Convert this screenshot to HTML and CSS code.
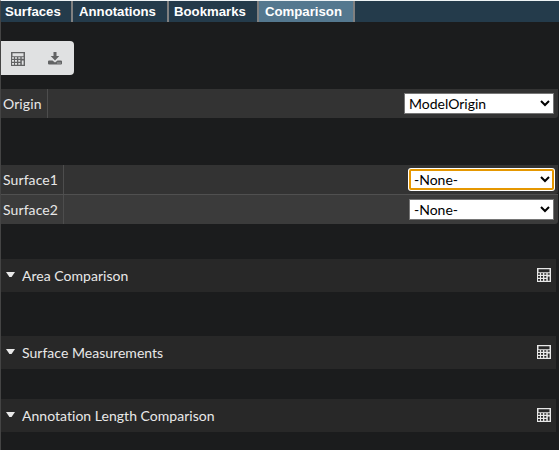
FILE: index.html
```html
<!DOCTYPE html>
<html lang="en">
<head>
<meta charset="utf-8">
<title>Comparison</title>
<link rel="stylesheet" href="styles.css">
</head>
<body>
<svg class="defs" width="0" height="0">
  <symbol id="calculator" viewBox="0 0 14 14">
    <path fill="currentColor" fill-rule="evenodd" d="M0 0h14v14H0zM1.5 1.3v2.9h11V1.3zM1 5.2v1.6h2V5.2zM4 5.2v1.6h2V5.2zM7.3 5.2v1.6h2V5.2zM10.7 5.2v1.6h2V5.2zM1 8v1.8h2V8zM4 8v1.8h2V8zM7.3 8v1.8h2V8zM1 11v1.8h2V11zM4 11v1.8h2V11zM7.3 11v1.8h2V11zM10.8 8.4v4.3h1.8V8.4z"/>
  </symbol>
</svg>
<div class="panel">
  <nav class="tabs">
    <span class="tab surfaces">Surfaces</span>
    <span class="tab annotations">Annotations</span>
    <span class="tab bookmarks">Bookmarks</span>
    <span class="tab comparison active">Comparison</span>
  </nav>
  <div class="buttons">
    <svg width="14" height="14"><use href="#calculator"/></svg>
    <svg width="14" height="13" viewBox="0 0 14 13"><path fill="currentColor" fill-rule="evenodd" d="M5.5 0h3v4h2.8L7 8.4 2.7 4h2.8zM.7 8.5h3.8L7 10.5l2.5-2h3.8l.7.7v2.6l-.7.7H.7l-.7-.7V9.200zM9.500 10.400v1h1v-1zM11.500 10.400v1h1v-1z"/></svg>
  </div>
  <div class="table origin">
    <div class="row"><div class="label">Origin</div><select><option>ModelOrigin</option></select></div>
  </div>
  <div class="table pair">
    <div class="row"><div class="label">Surface1</div><select class="focused"><option>-None-</option></select></div>
    <div class="row alt"><div class="label">Surface2</div><select><option>-None-</option></select></div>
  </div>
  <div class="section area"><i class="caret"></i><span>Area Comparison</span><svg width="14" height="14"><use href="#calculator"/></svg></div>
  <div class="section measure"><i class="caret"></i><span>Surface Measurements</span><svg width="14" height="14"><use href="#calculator"/></svg></div>
  <div class="section length"><i class="caret"></i><span>Annotation Length Comparison</span><svg width="14" height="14"><use href="#calculator"/></svg></div>
</div>
</body>
</html>
```
FILE: styles.css
```css
* { box-sizing: border-box; }
body {
  margin: 0;
  height: 450px;
  overflow: hidden;
  background: #1b1c1d;
  color: #e8e8e8;
  font: 14px/20px Lato, sans-serif;
  font-variant-ligatures: none;
}
.defs { display: none; }
.panel { height: 450px; border-left: 1px solid #444; border-top: 1px solid #eef3f5; }
.tabs {
  display: flex;
  height: 21px;
  background: #243b4b;
  font: bold 13.2px/21px "Liberation Sans", sans-serif;
  color: #fff;
}
.tab { padding-left: 4px; border-right: 2px solid #808080; white-space: nowrap; }
.surfaces { width: 72px; }
.annotations { width: 96px; padding-left: 6px; }
.bookmarks { width: 90px; padding-left: 5px; }
.comparison { width: 96px; padding-left: 6px; }
.active { background: #54788f; }
.buttons {
  display: flex;
  gap: 23px;
  align-items: center;
  width: 73px;
  height: 34px;
  margin-top: 19px;
  padding-left: 10px;
  border-radius: 0 4px 4px 0;
  background: #e0e1e2;
  color: #626364;
}
.buttons svg:first-child { margin-top: 2px; }
.table { width: 557px; }
.origin { margin-top: 14px; }
.pair { margin-top: 47px; }
.row {
  display: flex;
  align-items: center;
  height: 29px;
  padding-right: 4px;
  background: #333;
  border-radius: 0 0 3px 0;
}
.row.alt { height: 30px; background: #3b3b3b; border-top: 1px solid #505050; }
.label {
  align-self: stretch;
  width: 47px;
  padding-left: 2px;
  border-right: 1px solid #4d4d4d;
  line-height: 30px;
  letter-spacing: .1px;
}
.pair .label { width: 63px; }
select {
  width: 150px;
  height: 21px;
  margin-left: auto;
  padding: 0;
  border: 1px solid #767676;
  border-radius: 0;
  background: #fff;
  color: #000;
  font: 14px Lato, sans-serif;
}
.pair select { width: 145px; }
.pair .focused {
  border-color: #fff;
  border-radius: 2px;
  outline: 2px solid #e59700;
  outline-offset: -2px;
  box-shadow: 0 0 0 1px #fff;
}
.section {
  display: flex;
  align-items: center;
  width: 555px;
  height: 33px;
  padding: 0 5px;
  background: #282828;
}
.section span { margin-left: 8px; padding-top: 1px; letter-spacing: .03px; }
.section svg { margin: -1px 0 0 auto; }
.caret {
  width: 9px;
  height: 5px;
  margin: -2px -1px 0 0;
  background: #e8e8e8;
  clip-path: polygon(0 0, 100% 0, 62% 100%, 38% 100%);
}
.area { margin-top: 35px; }
.measure { margin-top: 44px; }
.length { margin-top: 30px; }
```
